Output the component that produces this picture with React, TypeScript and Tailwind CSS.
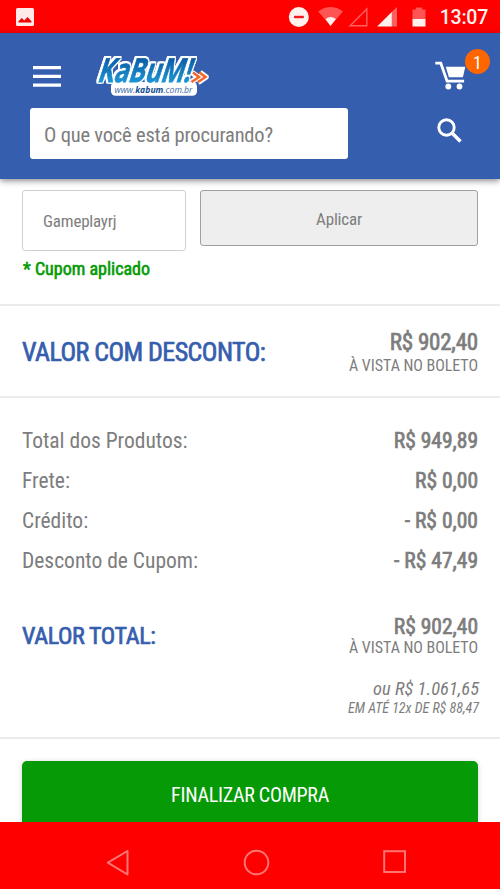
interface SummaryRow {
  label: string;
  value: string;
}

const SUMMARY: SummaryRow[] = [
  { label: 'Total dos Produtos:', value: 'R$ 949,89' },
  { label: 'Frete:', value: 'R$ 0,00' },
  { label: 'Crédito:', value: '- R$ 0,00' },
  { label: 'Desconto de Cupom:', value: '- R$ 47,49' },
];

function StatusBar() {
  return (
    <div className="flex h-[33px] shrink-0 items-center bg-[#ff0000] pl-4 pr-3 font-['Roboto',sans-serif]">
      <svg width="18" height="18" viewBox="0 0 18 18">
        <rect width="18" height="18" rx="1.500" fill="#ffe9e9" />
        <path d="M2.500 14.500v-1.200l3.300-3.300 2.500 2.500 3.200-3.500 4 4.300v1.200z" fill="#f00000" />
      </svg>
      <svg width="138" height="20" viewBox="287.500 7 138 20" className="ml-auto" fill="#fff1ee">
        <circle cx="298.300" cy="17" r="10" />
        <rect x="293.500" y="15.800" width="9.800" height="2.400" fill="#f01818" />
        <path d="M317.800 11.500a19 19 0 0 1 24.600 0L330 26z" fillOpacity=".35" />
        <path d="M325 19a8.500 8.500 0 0 1 10.400 0L330 26z" />
        <path d="M366.300 9v16.700h-16.700z" fill="none" stroke="#ff6060" strokeWidth="1.400" />
        <path d="M396.500 7v19.500h-5.300V12z" fillOpacity=".4" />
        <path d="M391.300 12v14.500h-14.700z" />
        <path d="M415.300 7.500h6.400v2h3.300v9.700h-13V9.500h3.300z" fillOpacity=".35" />
        <rect x="412" y="19" width="13" height="7.500" />
      </svg>
      <span className="ml-[14px] mt-[3px] text-[19.500px] font-medium leading-none tracking-[-0.250px] text-[#fff1ee]">
        13:07
      </span>
    </div>
  );
}

function Logo() {
  return (
    <svg width="116" height="44" viewBox="93 54 116 44" className="ml-8 overflow-visible">
      <defs>
        <linearGradient id="logo-fill" x1="0" y1="0" x2="0" y2="1">
          <stop offset="0.250" stopColor="#0b5ba6" />
          <stop offset="0.850" stopColor="#1f9bd8" />
        </linearGradient>
      </defs>
      <rect x="111" y="82" width="86" height="13.800" rx="4.500" fill="#fff" />
      <path d="m192 72.500 6 4.500-7 5.500m9-10 6 4.500-8 5.500" fill="none" stroke="#fff" strokeWidth="5.500" strokeLinejoin="round" />
      <g className="[filter:drop-shadow(1.2px_0_0_#fff)_drop-shadow(-1.2px_0_0_#fff)_drop-shadow(0_1.2px_0_#fff)_drop-shadow(0_-1.2px_0_#fff)]">
        <text
          transform="translate(96.500 82) skewX(-18)"
          textLength="93"
          lengthAdjust="spacingAndGlyphs"
          fontFamily="Open Sans, sans-serif"
          fontWeight="700"
          fontSize="33"
          fill="url(#logo-fill)"
          stroke="url(#logo-fill)"
          strokeWidth="0.800"
        >
          KaBuM!
        </text>
      </g>
      <path d="m193 72.500 6 4.500-7.500 5m8-9.500 6 4.500-7.500 5" fill="none" stroke="#f2682a" strokeWidth="2.600" />
      <text
        x="114.500"
        y="92.500"
        fontFamily="Open Sans, sans-serif"
        fontStyle="italic"
        fontSize="9.500"
        fill="#3a6da8"
        textLength="78"
        lengthAdjust="spacingAndGlyphs"
      >
        www.<tspan fontWeight="700" fill="#124f93">kabum</tspan>.com.br
      </text>
    </svg>
  );
}

function Header() {
  return (
    <header className="z-10 flex h-[146px] shrink-0 flex-col bg-[#355eae] shadow-[0_2px_6px_rgba(0,0,0,0.450)]">
      <div className="flex h-[75px] items-start pl-[33px] pr-[10px] pt-[16px]">
        <svg width="28" height="21" viewBox="0 0 28 21" className="mt-[17px]" fill="#fff">
          <path d="M0 0h28v3.200H0zM0 8.700h28v3.200H0zM0 17.500h28v3.200H0z" />
        </svg>
        <div className="mt-[5px]">
          <Logo />
        </div>
        <div className="relative ml-auto h-10 w-[55px]">
          <svg width="32" height="30" viewBox="435 61 32 30" className="mt-3" fill="#fff">
            <path d="M435.300 63.200h5.500l6.300 18h17" fill="none" stroke="#fff" strokeWidth="2.800" />
            <path d="M445.800 66.800h19.500l-2.400 10.400h-14z" />
            <circle cx="448.300" cy="86.500" r="2.900" />
            <circle cx="459.500" cy="86.500" r="2.900" />
          </svg>
          <span className="absolute right-0 top-0 flex size-[25px] items-center justify-center rounded-full bg-[#ff6600] pt-0.5 font-['Roboto_Condensed'] text-[18px] leading-none text-white">
            1
          </span>
        </div>
      </div>
      <div className="flex pl-[30px] pr-[37px]">
        <div className="flex h-[51px] w-[318px] items-center rounded-[3px] bg-white pl-[14px] pt-[3px] text-[20.500px] tracking-[-0.200px]">
          O que você está procurando?
        </div>
        <svg width="27" height="27" viewBox="0 0 27 27" className="ml-auto mt-[9px]" fill="none" stroke="#fff">
          <circle cx="10.500" cy="10.500" r="7.700" strokeWidth="2.900" />
          <path d="m16 16 8.500 8.500" strokeWidth="3.600" />
        </svg>
      </div>
    </header>
  );
}

function NavBar() {
  return (
    <nav className="z-10 h-[67px] shrink-0 bg-[#ff0000]">
      <svg width="500" height="67" viewBox="0 822 500 67" fill="none" stroke="#ff7474" strokeWidth="2">
        <path d="M127.500 851v23.500l-19.700-11.800z" strokeLinejoin="round" />
        <circle cx="256.500" cy="862.500" r="11.800" />
        <rect x="384.200" y="851.200" width="20.800" height="20.800" />
      </svg>
    </nav>
  );
}

export default function App() {
  return (
    <div className="flex h-[889px] w-[500px] flex-col overflow-hidden bg-white font-['Roboto_Condensed','Roboto',sans-serif] text-[#7d7d7d]">
      <StatusBar />
      <Header />
      <main className="flex min-h-0 flex-1 flex-col overflow-hidden">
        <section className="h-[127px] shrink-0 border-b-2 border-[#ebebeb] px-[22px] pt-[11px]">
          <div className="flex items-start gap-[14px] text-[17px] tracking-[-0.200px]">
            <div className="flex h-[61px] w-[164px] items-center rounded-[3px] border border-[#cfcfcf] pl-5 pt-[3px]">
              Gameplayrj
            </div>
            <button className="h-[56px] w-[278px] rounded-[3px] border border-[#a0a0a0] bg-[#eeeeee] pt-[3px]">
              Aplicar
            </button>
          </div>
          <p className="ml-px mt-[6px] text-[18px] leading-6 text-[#069a06] [-webkit-text-stroke:0.600px]">
            * Cupom aplicado
          </p>
        </section>

        <section className="flex h-[92px] shrink-0 items-center justify-between border-b-2 border-[#ebebeb] px-[22px] pt-px">
          <h2 className="mt-0.5 text-[26px] tracking-[-0.550px] text-[#355eae] [-webkit-text-stroke:0.700px]">
            VALOR COM DESCONTO:
          </h2>
          <div className="mt-0.5 flex flex-col items-end">
            <span className="text-[23px] leading-[24px] tracking-[-0.200px] [-webkit-text-stroke:0.700px]">R$ 902,40</span>
            <span className="pt-px text-[16px] leading-[19px] tracking-[-0.050px]">À VISTA NO BOLETO</span>
          </div>
        </section>

        <section className="h-[341px] shrink-0 border-b-2 border-[#ebebeb] px-[22px] pt-[23px]">
          {SUMMARY.map((row) => (
            <div key={row.label} className="flex h-10 items-center justify-between text-[21.500px]">
              <span>{row.label}</span>
              <span className="[-webkit-text-stroke:0.700px]">{row.value}</span>
            </div>
          ))}
          <div className="mt-[34px] flex items-center justify-between">
            <h2 className="text-[24px] tracking-[-0.380px] text-[#355eae] [-webkit-text-stroke:0.700px]">
              VALOR TOTAL:
            </h2>
            <div className="flex flex-col items-end">
              <span className="text-[21.500px] leading-[24px] [-webkit-text-stroke:0.700px]">R$ 902,40</span>
              <span className="text-[16px] leading-[18px] tracking-[-0.050px]">À VISTA NO BOLETO</span>
            </div>
          </div>
          <div className="-mr-px mt-[22px] flex flex-col items-end italic">
            <span className="text-[18.500px] leading-[21px]">ou R$ 1.061,65</span>
            <span className="text-[14px] leading-4">EM ATÉ 12x DE R$ 88,47</span>
          </div>
        </section>

        <div className="px-[22px] pt-[22px]">
          <button className="h-[67px] w-full rounded-[5px] bg-[#069a06] text-[20px] tracking-[-0.280px] text-white shadow-[0_1px_5px_rgba(0,0,0,0.200)]">
            FINALIZAR COMPRA
          </button>
        </div>
      </main>
      <NavBar />
    </div>
  );
}
